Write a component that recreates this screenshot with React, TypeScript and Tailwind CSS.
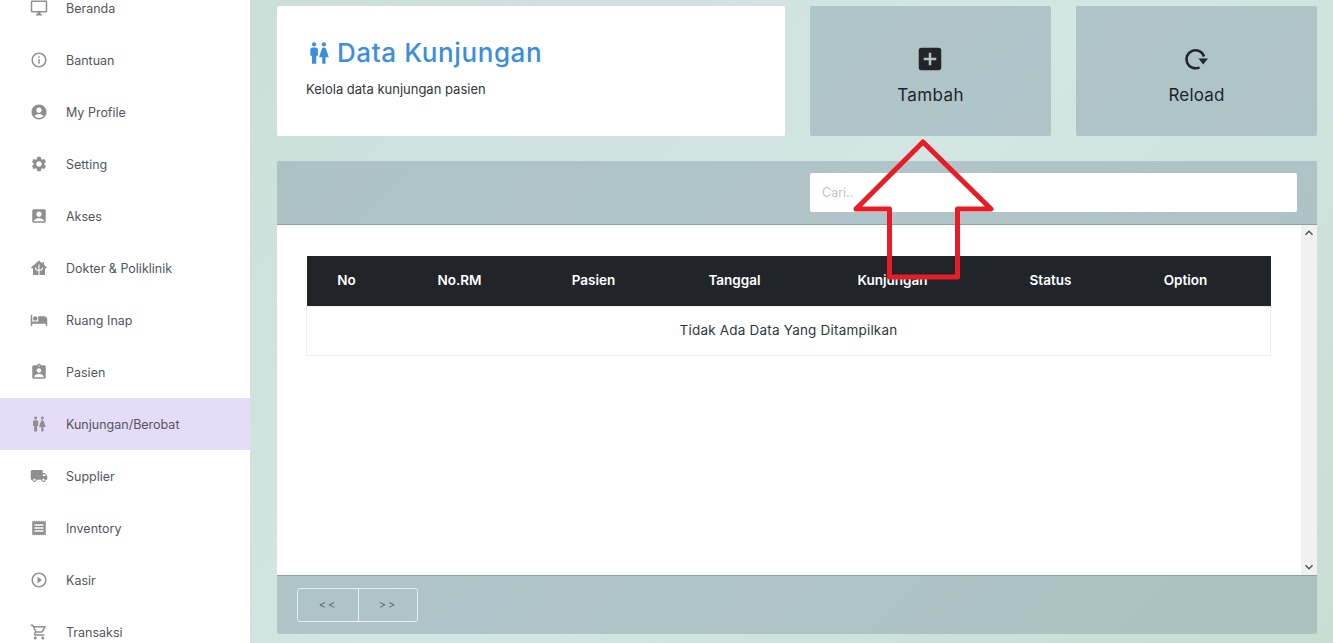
import type { ReactNode } from "react";
import {
  MdOutlineDesktopWindows,
  MdInfoOutline,
  MdAccountCircle,
  MdSettings,
  MdAccountBox,
  MdHotel,
  MdAssignmentInd,
  MdWc,
  MdLocalShipping,
  MdReceipt,
  MdPlayCircleOutline,
  MdOutlineShoppingCart,
  MdAddBox,
  MdKeyboardArrowUp,
  MdKeyboardArrowDown,
} from "react-icons/md";

// house with a small caduceus cut out, no matching icon in the packs
function ClinicIcon() {
  return (
    <svg width="18" height="18" viewBox="0 0 18 18">
      <path d="M9 1.5 L12.5 4.6 V3 H14 V5.9 L17 8.6 L16 9.6 H15 V16 H3 V9.6 H2 L1 8.6 Z" fill="currentColor" />
      <path
        d="M9 5.5 V16 M5.5 8.5 C5.5 11 7 11.5 9 11.5 C11 11.5 12.5 11 12.5 8.5"
        fill="none"
        stroke="#ffffff"
        strokeWidth="1.1"
      />
    </svg>
  );
}

function ReloadIcon() {
  return (
    <svg width="26" height="26" viewBox="0 0 26 26" className="-ml-[2px]">
      <path
        d="M21 10.5 A9 9 0 1 0 16.5 21.3"
        fill="none"
        stroke="currentColor"
        strokeWidth="2.6"
      />
      <path d="M15.5 12.5 H25 L20.2 18.5 Z" fill="currentColor" />
    </svg>
  );
}

const menu: { label: string; icon: ReactNode; active?: boolean }[] = [
  { label: "Beranda", icon: <MdOutlineDesktopWindows size={18} /> },
  { label: "Bantuan", icon: <MdInfoOutline size={18} /> },
  { label: "My Profile", icon: <MdAccountCircle size={18} /> },
  { label: "Setting", icon: <MdSettings size={18} /> },
  { label: "Akses", icon: <MdAccountBox size={18} /> },
  { label: "Dokter & Poliklinik", icon: <ClinicIcon /> },
  { label: "Ruang Inap", icon: <MdHotel size={18} /> },
  { label: "Pasien", icon: <MdAssignmentInd size={18} /> },
  { label: "Kunjungan/Berobat", icon: <MdWc size={18} />, active: true },
  { label: "Supplier", icon: <MdLocalShipping size={18} /> },
  { label: "Inventory", icon: <MdReceipt size={18} /> },
  { label: "Kasir", icon: <MdPlayCircleOutline size={18} /> },
  { label: "Transaksi", icon: <MdOutlineShoppingCart size={18} /> },
];

const columns = [
  { label: "No", cls: "w-[80px]" },
  { label: "No.RM", cls: "w-[146px]" },
  { label: "Pasien", cls: "w-[122px]" },
  { label: "Tanggal", cls: "w-[160px]" },
  { label: "Kunjungan", cls: "w-[156px]" },
  { label: "Status", cls: "w-[160px]" },
  { label: "Option", cls: "w-[110px]" },
];

export default function App() {
  return (
    <div className="relative flex h-[643px] w-[1333px] overflow-hidden bg-[linear-gradient(135deg,#c9ddd5_0%,#d3e6e4_55%,#c9ddd3_100%)] font-['Inter',sans-serif]">
      {/* Sidebar */}
      <aside className="w-[250px] shrink-0 overflow-hidden bg-white">
        <ul className="-mt-[18px]">
          {menu.map((m) => (
            <li
              key={m.label}
              className={`flex h-[52px] items-center ${m.active ? "bg-[#e4dcf8]" : ""}`}
            >
              <span className="ml-[30px] flex w-[18px] justify-center text-[#8f8f8f]">{m.icon}</span>
              <span className="ml-[18px] pt-[2px] text-[12.5px] text-[#55555c]">{m.label}</span>
            </li>
          ))}
        </ul>
      </aside>

      {/* Content */}
      <main className="flex flex-1 flex-col pt-[6px] pl-[27px] pr-[16px]">
        <div className="flex h-[130px] gap-[25px]">
          <div className="w-[508px] rounded-[2px] bg-white pt-[31px] pl-[29px]">
            <h1 className="flex items-center text-[26px] leading-[32px] font-medium tracking-[0.6px] text-[#3a8edb]">
              <MdWc size={26} className="mr-[5px]" />
              Data Kunjungan
            </h1>
            <p className="mt-[11px] text-[13px] text-[#33363a]">Kelola data kunjungan pasien</p>
          </div>
          <button className="flex w-[241px] flex-col items-center rounded-[2px] bg-[#8ea3ad]/50 pt-[38px] text-[#212529]">
            <MdAddBox size={30} className="-ml-[1px]" />
            <span className="mt-[9px] text-[17px] tracking-[0.4px]">Tambah</span>
          </button>
          <button className="flex w-[241px] flex-col items-center rounded-[2px] bg-[#8ea3ad]/50 pt-[38px] text-[#212529]">
            <span className="flex h-[30px] items-center"><ReloadIcon /></span>
            <span className="mt-[9px] text-[17px] tracking-[0.2px]">Reload</span>
          </button>
        </div>

        <section className="mt-[25px] flex h-[473px] flex-col overflow-hidden rounded-[2px] bg-[#8ea3ad]/50">
          <div className="flex h-[64px] justify-end border-b border-[#929fa0] pt-[12px] pr-[20px]">
            <input
              placeholder="Cari.."
              className="h-[39px] w-[487px] rounded-[2px] bg-white px-[12px] text-[12.5px] placeholder:text-[#c4c4c4]"
            />
          </div>
          <div className="flex h-[351px] border-b border-[#929fa0] bg-white">
            <div className="flex-1 pt-[31px] pl-[29px]">
              <table className="w-[965px] table-fixed border-collapse">
                <thead>
                  <tr className="h-[50px] bg-[#212529] text-white">
                    {columns.map((c) => (
                      <th key={c.label} className={`${c.cls} pb-[2px] text-center text-[13.5px] font-semibold`}>
                        {c.label}
                      </th>
                    ))}
                    <th />
                  </tr>
                </thead>
                <tbody>
                  <tr className="h-[49px] border border-[#eeeeee]">
                    <td colSpan={8} className="text-center text-[13.5px] tracking-[0.2px] text-[#33363a]">
                      Tidak Ada Data Yang Ditampilkan
                    </td>
                  </tr>
                </tbody>
              </table>
            </div>
            <div className="flex w-[16px] flex-col items-center justify-between bg-[#f1f1f1] text-[#505050]">
              <MdKeyboardArrowUp size={16} />
              <MdKeyboardArrowDown size={16} />
            </div>
          </div>
          <div className="pt-[12px] pl-[20px]">
            <div className="flex h-[34px] w-[121px] rounded-[3px] border border-[#e6eeee] text-[11px] text-[#5d6a6c]">
              <span className="flex flex-1 items-center justify-center border-r border-[#e6eeee] tracking-[2px]">&lt;&lt;</span>
              <span className="flex w-[58px] items-center justify-center tracking-[2px]">&gt;&gt;</span>
            </div>
          </div>
        </section>
      </main>

      {/* Red annotation arrow over the page */}
      <svg className="pointer-events-none absolute top-0 left-0" width="1333" height="643">
        <path
          d="M923 142 L991 209 L957.5 209 L957.5 277 L889.5 277 L889.5 209 L856 209 Z"
          fill="none"
          stroke="#e81c27"
          strokeWidth="5"
          strokeLinejoin="round"
        />
      </svg>
    </div>
  );
}
